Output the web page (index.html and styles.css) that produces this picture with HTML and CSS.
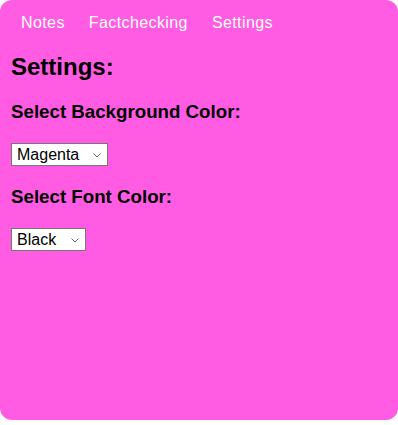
FILE: index.html
```html
<!DOCTYPE html>
<html>
  <head>
    <link rel="stylesheet" href="styles.css">
  </head>
  <body>
    <div class="app">
      <nav class="tabs">
        <a href="#">Notes</a>
        <a href="#">Factchecking</a>
        <a href="#">Settings</a>
      </nav>
      <div class="settings">
        <h2>Settings:</h2>
        <h3>Select Background Color:</h3>
        <span class="picker">
          <select id="bg-color">
            <option selected>Magenta</option>
            <option>White</option>
            <option>Yellow</option>
          </select>
          <svg class="chevron" width="8" height="5" viewBox="0 0 8 5"><path d="M0.5 0.5 L4 4 L7.5 0.5" fill="none" stroke="#666" stroke-width="1"/></svg>
        </span>
        <h3>Select Font Color:</h3>
        <span class="picker">
          <select id="font-color">
            <option selected>Black</option>
            <option>White</option>
          </select>
          <svg class="chevron" width="8" height="5" viewBox="0 0 8 5"><path d="M0.5 0.5 L4 4 L7.5 0.5" fill="none" stroke="#666" stroke-width="1"/></svg>
        </span>
      </div>
    </div>
  </body>
</html>
```

FILE: styles.css
```css
body {
  margin: 0;
  background: #fff;
  font-family: "Liberation Sans", Arial, sans-serif;
}
.app {
  width: 398px;
  height: 420px;
  background: #ff5ce3;
  border-radius: 12px;
  color: #000;
}
.tabs {
  display: flex;
  padding: 14px 9px 0;
}
.tabs a {
  padding: 0 12px;
  color: #fff;
  text-decoration: none;
  font-size: 16px;
  letter-spacing: 0.4px;
}
.settings {
  padding: 0 11px;
}
h2 {
  font-size: 24px;
  margin: 21px 0 0;
}
h3 {
  font-size: 18.72px;
  margin: 20px 0 20px;
}
.picker {
  position: relative;
  display: inline-block;
}
select {
  -webkit-appearance: none;
  appearance: none;
  font-family: "Liberation Sans", Arial, sans-serif;
  font-size: 16px;
  line-height: 19px;
  height: 23px;
  padding: 1px 27px 1px 5px;
  border: 1px solid #767676;
  border-radius: 0;
  background: #fff;
  color: #000;
}
.chevron {
  position: absolute;
  right: 7px;
  top: 10px;
  pointer-events: none;
}
```
